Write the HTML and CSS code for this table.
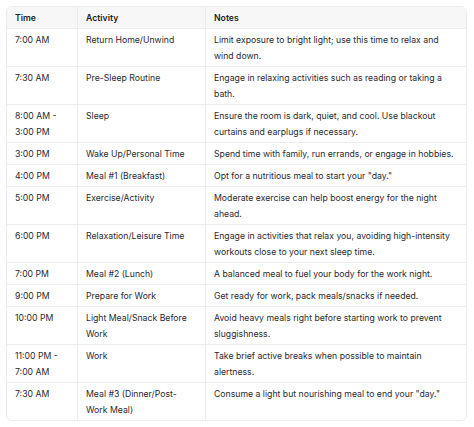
FILE: index.html
```html
<!DOCTYPE html>
<html>
<head>
<meta charset="utf-8">
<link rel="stylesheet" href="styles.css">
</head>
<body>
<div class="wrap">
<table class="sched">
<colgroup><col class="c1"><col class="c2"><col class="c3"></colgroup>
<thead>
<tr><th>Time</th><th>Activity</th><th>Notes</th></tr>
</thead>
<tbody>
<tr><td>7:00 AM</td><td>Return Home/Unwind</td><td>Limit exposure to bright light; use this time to relax and wind down.</td></tr>
<tr><td>7:30 AM</td><td>Pre-Sleep Routine</td><td>Engage in relaxing activities such as reading or taking a bath.</td></tr>
<tr><td>8:00 AM - 3:00 PM</td><td>Sleep</td><td>Ensure the room is dark, quiet, and cool. Use blackout curtains and earplugs if necessary.</td></tr>
<tr><td>3:00 PM</td><td>Wake Up/Personal Time</td><td>Spend time with family, run errands, or engage in hobbies.</td></tr>
<tr><td>4:00 PM</td><td>Meal #1 (Breakfast)</td><td>Opt for a nutritious meal to start your "day."</td></tr>
<tr><td>5:00 PM</td><td>Exercise/Activity</td><td>Moderate exercise can help boost energy for the night ahead.</td></tr>
<tr><td>6:00 PM</td><td>Relaxation/Leisure Time</td><td>Engage in activities that relax you, avoiding high-intensity workouts close to your next sleep time.</td></tr>
<tr><td>7:00 PM</td><td>Meal #2 (Lunch)</td><td>A balanced meal to fuel your body for the work night.</td></tr>
<tr><td>9:00 PM</td><td>Prepare for Work</td><td>Get ready for work, pack meals/snacks if needed.</td></tr>
<tr><td>10:00 PM</td><td>Light Meal/Snack Before Work</td><td>Avoid heavy meals right before starting work to prevent sluggishness.</td></tr>
<tr><td>11:00 PM - 7:00 AM</td><td>Work</td><td>Take brief active breaks when possible to maintain alertness.</td></tr>
<tr><td>7:30 AM</td><td>Meal #3 (Dinner/Post-Work Meal)</td><td>Consume a light but nourishing meal to end your "day."</td></tr>
</tbody>
</table>
</div>
</body>
</html>
```
FILE: styles.css
```css
html, body { margin: 0; padding: 0; background: #fff; }
body { font-family: "Inter", "Liberation Sans", sans-serif; color: #2a2a30; }
.wrap { padding: 6px 7px 0 6px; }
.sched {
  width: 461px;
  border-collapse: separate;
  border-spacing: 0;
  border: 1px solid #ececec;
  border-radius: 6px;
  table-layout: fixed;
  font-size: 8.7px;
  line-height: 16px;
  overflow: hidden;
}
.c1 { width: 70px; }
.c2 { width: 128px; }
.sched th, .sched td {
  text-align: left;
  vertical-align: top;
  padding: 3px 8px 2px 8px;
  border-left: 1px solid #ececec;
  border-top: 1px solid #ececec;
}
.sched th:first-child, .sched td:first-child { border-left: none; }
.sched thead th {
  border-top: none;
  background: #f7f7f8;
  font-weight: 600;
  color: #1f1f24;
}
```
